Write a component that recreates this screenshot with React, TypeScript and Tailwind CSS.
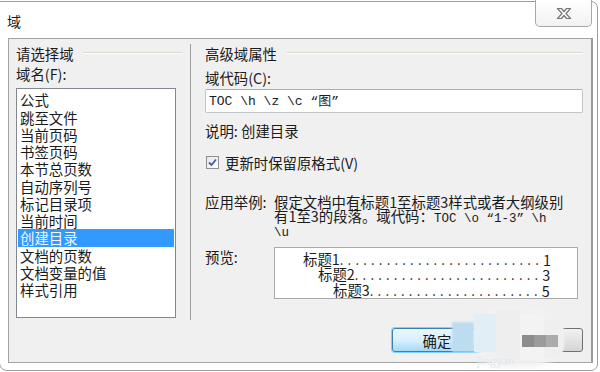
import React from "react";

const fields = [
  "公式",
  "跳至文件",
  "当前页码",
  "书签页码",
  "本节总页数",
  "自动序列号",
  "标记目录项",
  "当前时间",
  "创建目录",
  "文档的页数",
  "文档变量的值",
  "样式引用",
];

const preview = [
  { title: "标题1", page: "1", indent: "pl-[28px]", dots: 26 },
  { title: "标题2", page: "3", indent: "pl-[43px]", dots: 24 },
  { title: "标题3", page: "5", indent: "pl-[58px]", dots: 22 },
];

// etched separator after a group title
const Etch = ({ className }: { className: string }) => (
  <div className={`h-[2px] flex-1 border-t border-[#d8d8cc] border-b border-b-white ${className}`} />
);

const App = () => {
  return (
    <div className="w-[600px] h-[372px] bg-white overflow-hidden relative font-['Noto_Sans_CJK_SC',sans-serif] text-[14.4px] text-[#1b1b1b]">
      <div className="ml-[-1px] mt-[1px] w-[599px] h-[370px] border border-[#9c9c9c] rounded-tr-[7px] rounded-br-[7px] rounded-bl-[8px] bg-white flex flex-col">
        {/* title bar */}
        <div className="h-[36px] flex justify-between items-start">
          <span className="pl-[7px] pt-[12px] leading-[14px] text-[14px]">域</span>
          <div className="mt-[-2px] mr-[5px] w-[57px] h-[27px] border border-t-0 border-[#a8a8a8] rounded-b-[5px] bg-gradient-to-b from-white to-[#f2f2f2] flex items-center justify-center">
            <svg width="16" height="13" viewBox="0 0 16 13">
              <path
                d="M1.5 1.5 H5.5 L8 4.5 L10.5 1.5 H14.5 L10 6.5 L14.5 11.5 H10.5 L8 8.5 L5.5 11.5 H1.5 L6 6.5 Z"
                fill="#fafafa"
                stroke="#777"
                strokeWidth="1.2"
                strokeLinejoin="round"
              />
            </svg>
          </div>
        </div>

        {/* panel */}
        <div className="ml-[8px] w-[585px] h-[325px] bg-[#f0f0f0] border border-[#a3a3a3] border-r-2 border-r-[#9a9a9a] flex flex-col">
          <div className="flex h-[281px]">
            {/* left column */}
            <div className="w-[181px] pl-[7px] pt-[5.5px] flex flex-col">
              <div className="flex items-center leading-[17px]">
                <span>请选择域</span>
                <Etch className="ml-[9px] mr-[8px]" />
              </div>
              <div className="mt-[3px] leading-[17px]">域名(F):</div>
              <div className="mt-[6.5px] w-[160px] h-[230px] bg-white border border-[#828790] px-[1px] pt-[2.4px]">
                {fields.map((f) =>
                  f === "创建目录" ? (
                    <div key={f} className="leading-[17.25px] pl-[2px] bg-[#3399ff] text-[#eef6ff]">
                      {f}
                    </div>
                  ) : (
                    <div key={f} className="leading-[17.25px] pl-[2px]">
                      {f}
                    </div>
                  )
                )}
              </div>
            </div>

            {/* right column */}
            <div className="flex-1 mt-[5px] h-[276px] border-l border-[#a0a0a0] pl-[14px] pr-[8px] pt-[0.5px] flex flex-col">
              <div className="flex items-center leading-[17px]">
                <span>高级域属性</span>
                <Etch className="ml-[10px]" />
              </div>
              <div className="mt-[7px] leading-[17px]">域代码(C):</div>
              <div className="mt-[3.5px] h-[24px] bg-white border border-[#c2c5ca] border-t-[#abadb3] rounded-[2px] pl-[3px] flex items-center">
                <span className="font-['Liberation_Mono','Noto_Sans_CJK_SC',monospace] text-[13px] leading-[14px]">
                  TOC \h \z \c “<span className="font-['Noto_Sans_CJK_SC',sans-serif]">图</span>”
                </span>
              </div>
              <div className="mt-[8.5px] leading-[17px]">说明: 创建目录</div>

              <div className="mt-[15.5px] flex items-center leading-[17px]">
                <div className="ml-[1px] w-[13px] h-[13px] border border-[#8e8f8f] bg-gradient-to-br from-[#e6e6e6] to-white flex items-center justify-center">
                  <svg width="9" height="9" viewBox="0 0 9 9">
                    <path d="M1 4.5 L3.5 7 L8 1.5" fill="none" stroke="#3d5a9e" strokeWidth="1.8" />
                  </svg>
                </div>
                <span className="ml-[6px]">更新时保留原格式(V)</span>
              </div>

              <div className="mt-[24px] flex">
                <span className="w-[69px] leading-[14.2px] shrink-0">应用举例:</span>
                <div className="leading-[14.2px]">
                  <div>假定文档中有标题1至标题3样式或者大纲级别</div>
                  <div>
                    有1至3的段落。域代码：
                    <span className="font-['Liberation_Mono',monospace] text-[12.5px]">TOC \o “1-3” \h</span>
                  </div>
                  <div className="font-['Liberation_Mono',monospace] text-[12.5px]">\u</div>
                </div>
              </div>

              <div className="mt-[6.4px] flex">
                <span className="w-[69px] pt-[0.5px] leading-[17px] shrink-0">预览:</span>
                <div className="w-[304px] h-[52px] bg-white border border-[#a9a9a9] pt-[4px] pr-[30px]">
                  {preview.map((p) => (
                    <div key={p.title} className={`flex items-end justify-between whitespace-nowrap leading-[14.3px] ${p.indent}`}>
                      <span>
                        {p.title}
                        <span className="tracking-[4.2px] text-[13px]">{".".repeat(p.dots)}</span>
                      </span>
                      <span>{p.page}</span>
                    </div>
                  ))}
                </div>
              </div>
            </div>
          </div>

          {/* buttons */}
          <div className="pt-[8px] pr-[8px] flex justify-end gap-[11px]">
            <button className="w-[90px] h-[24px] rounded-[3px] border border-[#3c7fb1] shadow-[0_0_0_1px_#7fd2ff] bg-gradient-to-b from-[#eaf6fd] via-[#d9f0fc] to-[#a7d9f5] flex items-center justify-center leading-[17px]">
              确定
            </button>
            <button className="w-[90px] h-[24px] rounded-[3px] border border-[#707070] bg-gradient-to-b from-[#f2f2f2] to-[#d5d5d5] flex items-center justify-center leading-[17px]">
              取消
            </button>
          </div>
        </div>
      </div>

      {/* mosaic watermark over the buttons */}
      <div className="absolute left-[447px] top-[300px] w-[125px] h-[72px]">
        <div className="absolute left-[25px] top-[5px] w-[90px] h-[62px] rounded-[30px] bg-[#f1f1f1] blur-[3px]" />
        <div className="absolute left-[5px] top-[22px] w-[22px] h-[30px] bg-[#bddcf0] blur-[1px]" />
        <div className="absolute left-[27px] top-[14px] w-[22px] h-[38px] bg-[#e2eef5]" />
        <div className="absolute left-[49px] top-[10px] w-[24px] h-[50px] bg-[#eeeeee]" />
        <div className="absolute left-[73px] top-[14px] w-[24px] h-[46px] bg-[#f3f3f3]" />
        <div className="absolute left-[97px] top-[20px] w-[20px] h-[38px] bg-[#efefef] rounded-r-[12px]" />
        <div className="absolute left-[75px] top-[35px] w-[12px] h-[12px] bg-[#8c8c8c]" />
        <div className="absolute left-[87px] top-[35px] w-[12px] h-[12px] bg-[#9b9b9b]" />
        <div className="absolute left-[99px] top-[35px] w-[12px] h-[12px] bg-[#ababab]" />
        <div className="absolute left-[30px] top-[54px] text-[11px] leading-[12px] text-[#dfe9ef]">jingyan</div>
      </div>
    </div>
  );
};

export default App;
